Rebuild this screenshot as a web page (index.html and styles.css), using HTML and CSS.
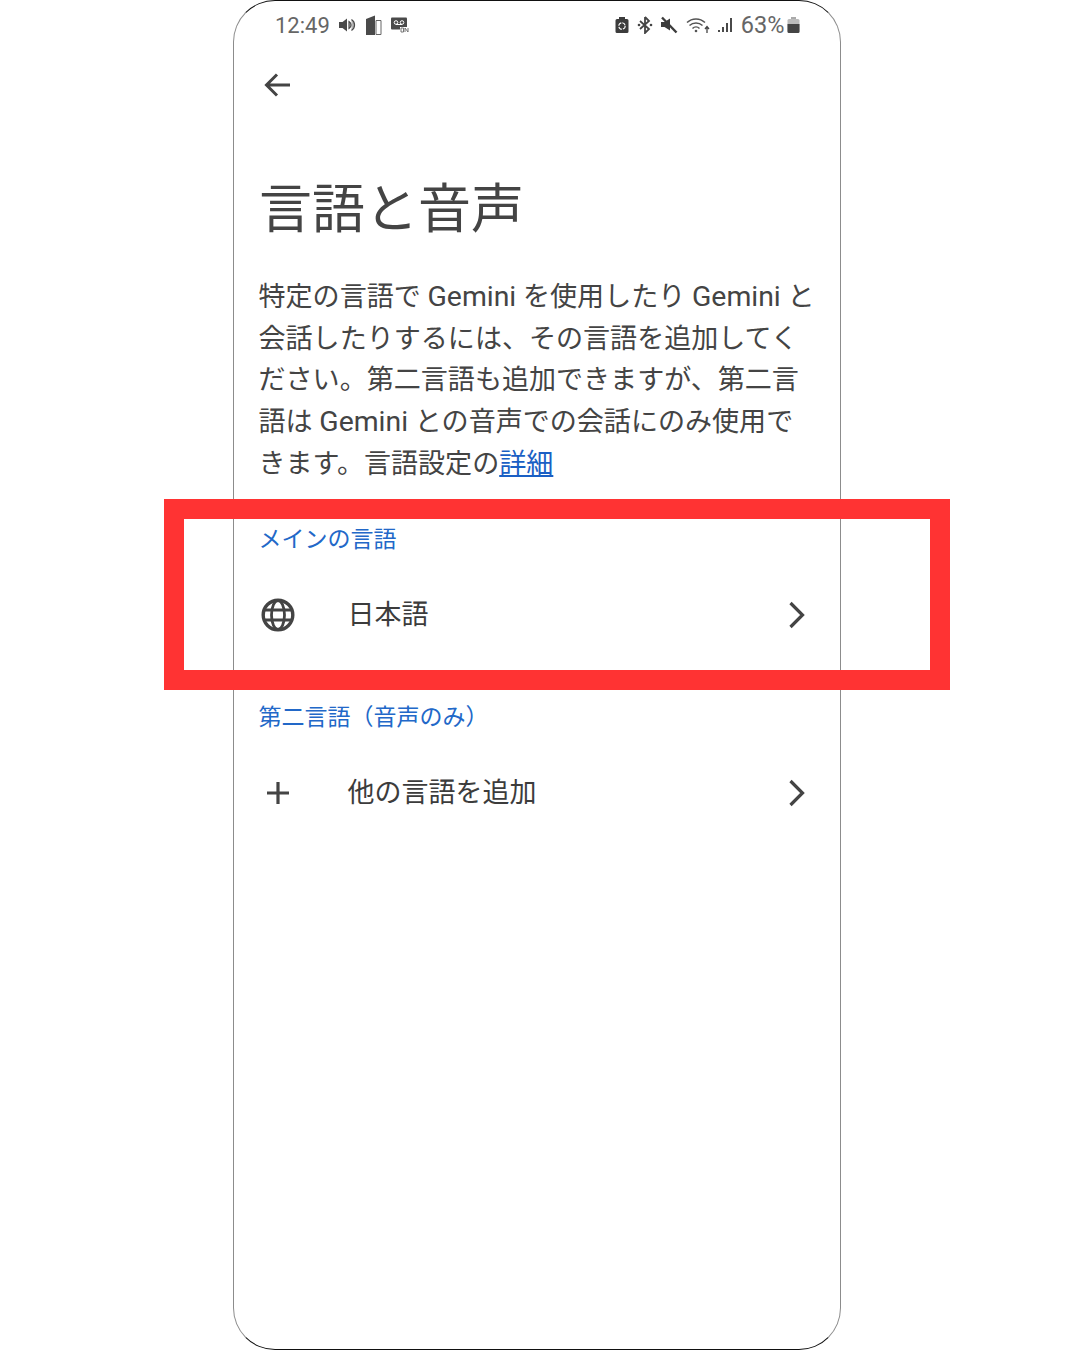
FILE: index.html
```html
<!DOCTYPE html>
<html lang="ja">
<head>
<meta charset="utf-8">
<title>言語と音声</title>
<link rel="stylesheet" href="styles.css">
</head>
<body>
<main class="stage">
  <div class="phone">
    <header class="status">
      <div class="status-group">
        <span class="time">12:49</span>
        <svg class="si" width="18" height="16" viewBox="0 0 18 16"><path d="M1 5h3.500L9 1.500v13L4.500 11H1z" fill="#4a4a4a"/><path d="M11 4.500a4 4 0 0 1 0 7zM13.500 2.500a6.500 6.500 0 0 1 0 11" fill="#4a4a4a" stroke="#4a4a4a" stroke-width="1.200" fill-opacity=".4"/></svg>
        <svg class="si gap-a" width="17" height="20" viewBox="0 0 17 20"><path d="M1 4l9-3.500V20H1z" fill="#4a4a4a"/><path d="M11 5.500h5V19.500h-5z" fill="#fff" stroke="#666"/></svg>
        <svg class="si gap-b" width="18" height="16" viewBox="0 0 18 16"><rect x="0" y="0.500" width="16" height="12" rx="1" fill="#4a4a4a"/><circle cx="5" cy="5.500" r="1.800" fill="none" stroke="#fff"/><circle cx="11" cy="5.500" r="1.800" fill="none" stroke="#fff"/><path d="M5 7.500h6" stroke="#fff"/><rect x="9" y="10" width="9" height="6" fill="#fff"/><path d="M10 11h2.500v4H10zM14 15v-4l3 4v-4" fill="none" stroke="#666" stroke-width=".9"/></svg>
      </div>
      <div class="status-group right">
        <svg class="si" width="14" height="18" viewBox="0 0 14 18"><path d="M4 1h6v2h2a1.500 1.500 0 0 1 1.500 1.500v11A1.500 1.500 0 0 1 12 17H2a1.500 1.500 0 0 1-1.500-1.500v-11A1.500 1.500 0 0 1 2 3h2z" fill="#3c3c3c"/><circle cx="7" cy="10" r="3.200" fill="none" stroke="#fff" stroke-width="1.100" stroke-dasharray="4 1"/></svg>
        <svg class="si" width="16" height="18" viewBox="0 0 16 18"><path d="M8 1v16l4-4L3 5M8 1l4 4-9 8" fill="none" stroke="#444" stroke-width="1.800"/><circle cx="2" cy="9" r="1.300" fill="#444"/><circle cx="14" cy="9" r="1.300" fill="#444"/></svg>
        <svg class="si" width="18" height="18" viewBox="0 0 18 18"><path d="M1 6h3.500L10 2.500v12L4.500 11H1z" fill="#3c3c3c"/><path d="M2 1.500l14.500 15" stroke="#3c3c3c" stroke-width="2.400"/></svg>
        <svg class="si" width="24" height="18" viewBox="0 0 24 18"><path d="M1 6.500a13 13 0 0 1 18 0M3.500 9.500a9.500 9.500 0 0 1 13 0M6.500 12.500a5 5 0 0 1 7 0" fill="none" stroke="#555" stroke-width="1.500"/><circle cx="10" cy="15" r="1.300" fill="#555"/><path d="M21 17V11M19 13l2-2.500 2 2.500" fill="none" stroke="#444" stroke-width="1.300"/></svg>
        <svg class="si" width="16" height="16" viewBox="0 0 16 16"><path d="M1 13h2v2H1zM5 10h2v5H5zM9 6h2v9H9zM13 1h2v14h-2z" fill="#4a4a4a"/></svg>
        <span class="pct">63%</span>
        <svg class="si batt" width="13" height="18" viewBox="0 0 13 18"><path d="M4 1h5v2H4z" fill="#aaa"/><rect x="0.500" y="3" width="12" height="14" rx="1.500" fill="#bbb"/><path d="M0.500 8h12v7.500a1.500 1.500 0 0 1-1.500 1.500H2a1.500 1.500 0 0 1-1.500-1.500z" fill="#444"/></svg>
      </div>
    </header>

    <button class="back" aria-label="戻る">
      <svg width="28" height="28" viewBox="0 0 28 28"><path d="M27 14H4M14 3.500 3.500 14 14 24.500" fill="none" stroke="#444" stroke-width="3"/></svg>
    </button>

    <h1 class="title">言語と音声</h1>

    <p class="lead">特定の言語で <span class="latin">Gemini</span> を使用したり <span class="latin">Gemini</span> と<br>会話したりするには、その言語を追加してく<br>ださい。第二言語も追加できますが、第二言<br>語は <span class="latin">Gemini</span> との音声での会話にのみ使用で<br>きます。言語設定の<a class="link" href="#">詳細</a></p>

    <section class="group first">
      <h2 class="label">メインの言語</h2>
      <div class="row">
        <svg class="row-icon" width="34" height="34" viewBox="0 0 34 34"><g fill="none" stroke="#444" stroke-width="3.400"><circle cx="17" cy="17" r="14.800"/></g><g fill="none" stroke="#444" stroke-width="2.800"><ellipse cx="17" cy="17" rx="6.500" ry="14.500"/><path d="M3.500 12h27M3.500 22h27"/></g></svg>
        <span class="row-text">日本語</span>
        <svg class="chev" width="18" height="28" viewBox="0 0 18 28"><path d="M2.500 2 14.500 14 2.500 26" fill="none" stroke="#444" stroke-width="3.200"/></svg>
      </div>
    </section>

    <section class="group second">
      <h2 class="label">第二言語（音声のみ）</h2>
      <div class="row">
        <svg class="row-icon" width="34" height="34" viewBox="0 0 34 34"><path d="M17 6v22M6 17h22" fill="none" stroke="#444" stroke-width="3.200"/></svg>
        <span class="row-text">他の言語を追加</span>
        <svg class="chev" width="18" height="28" viewBox="0 0 18 28"><path d="M2.500 2 14.500 14 2.500 26" fill="none" stroke="#444" stroke-width="3.200"/></svg>
      </div>
    </section>
  </div>
  <div class="highlight"></div>
</main>
</body>
</html>
```

FILE: styles.css
```css
* { box-sizing: border-box; }
html, body { margin: 0; height: 100%; background: #fff; }
body { font-family: "Roboto", "Noto Sans CJK JP", sans-serif; color: #3f3f3f; overflow: hidden; }
.stage { position: relative; width: 1080px; height: 1350px; overflow: hidden; }
.phone {
  width: 608px; height: 1350px; margin-left: 233px;
  border: 1.500px solid #8c8c8c; border-top-color: #111; border-bottom-color: #111;
  border-radius: 42px; padding: 0 25px; display: flex; flex-direction: column;
}
.status { display: flex; justify-content: space-between; align-items: center; height: 48px; padding: 0 15px 0 16px; flex: none; }
.status-group { display: flex; align-items: center; }
.status-group.right { gap: 7.500px; }
.time { font: 400 22px "Roboto", sans-serif; color: #666; margin-right: 8px; }
.pct { font: 400 23.500px "Roboto", sans-serif; color: #666; }
.si { display: block; flex: none; }
.gap-a { margin-left: 9px; }
.gap-b { margin-left: 9px; }
.batt { margin-left: -5px; }
.back { width: 28px; height: 28px; margin: 22px 0 0 4px; padding: 0; border: 0; background: none; flex: none; }
.back svg { display: block; }
.title { margin: 76px 0 0; font-size: 53px; line-height: 70px; font-weight: 400; color: #444; height: 70px; }
.lead { margin: 32px 0 0 -0.500px; font-size: 27.050px; line-height: 41.700px; color: #444; font-weight: 400; white-space: nowrap; }
.latin { font-size: 28.400px; line-height: 1; }
.link { color: #1a5fc4; text-decoration: underline; }
.group { flex: none; }
.group.first { margin-top: 37px; }
.group.second { margin-top: 58px; }
.label { margin: 0 0 0 -0.500px; font-size: 23px; line-height: 34px; font-weight: 400; color: #2268c8; }
.row { display: flex; align-items: center; height: 86px; padding-top: 30px; }
.row-icon { display: block; flex: none; margin-left: 2px; }
.row-text { margin-left: 52.500px; font-size: 27px; line-height: 40px; flex: 1; color: #3c3c3c; }
.chev { flex: none; margin-right: 9px; display: block; }
.highlight {
  position: absolute; left: 164px; top: 499px; width: 786px; height: 191px;
  border: 20px solid #ff3333;
}
```
